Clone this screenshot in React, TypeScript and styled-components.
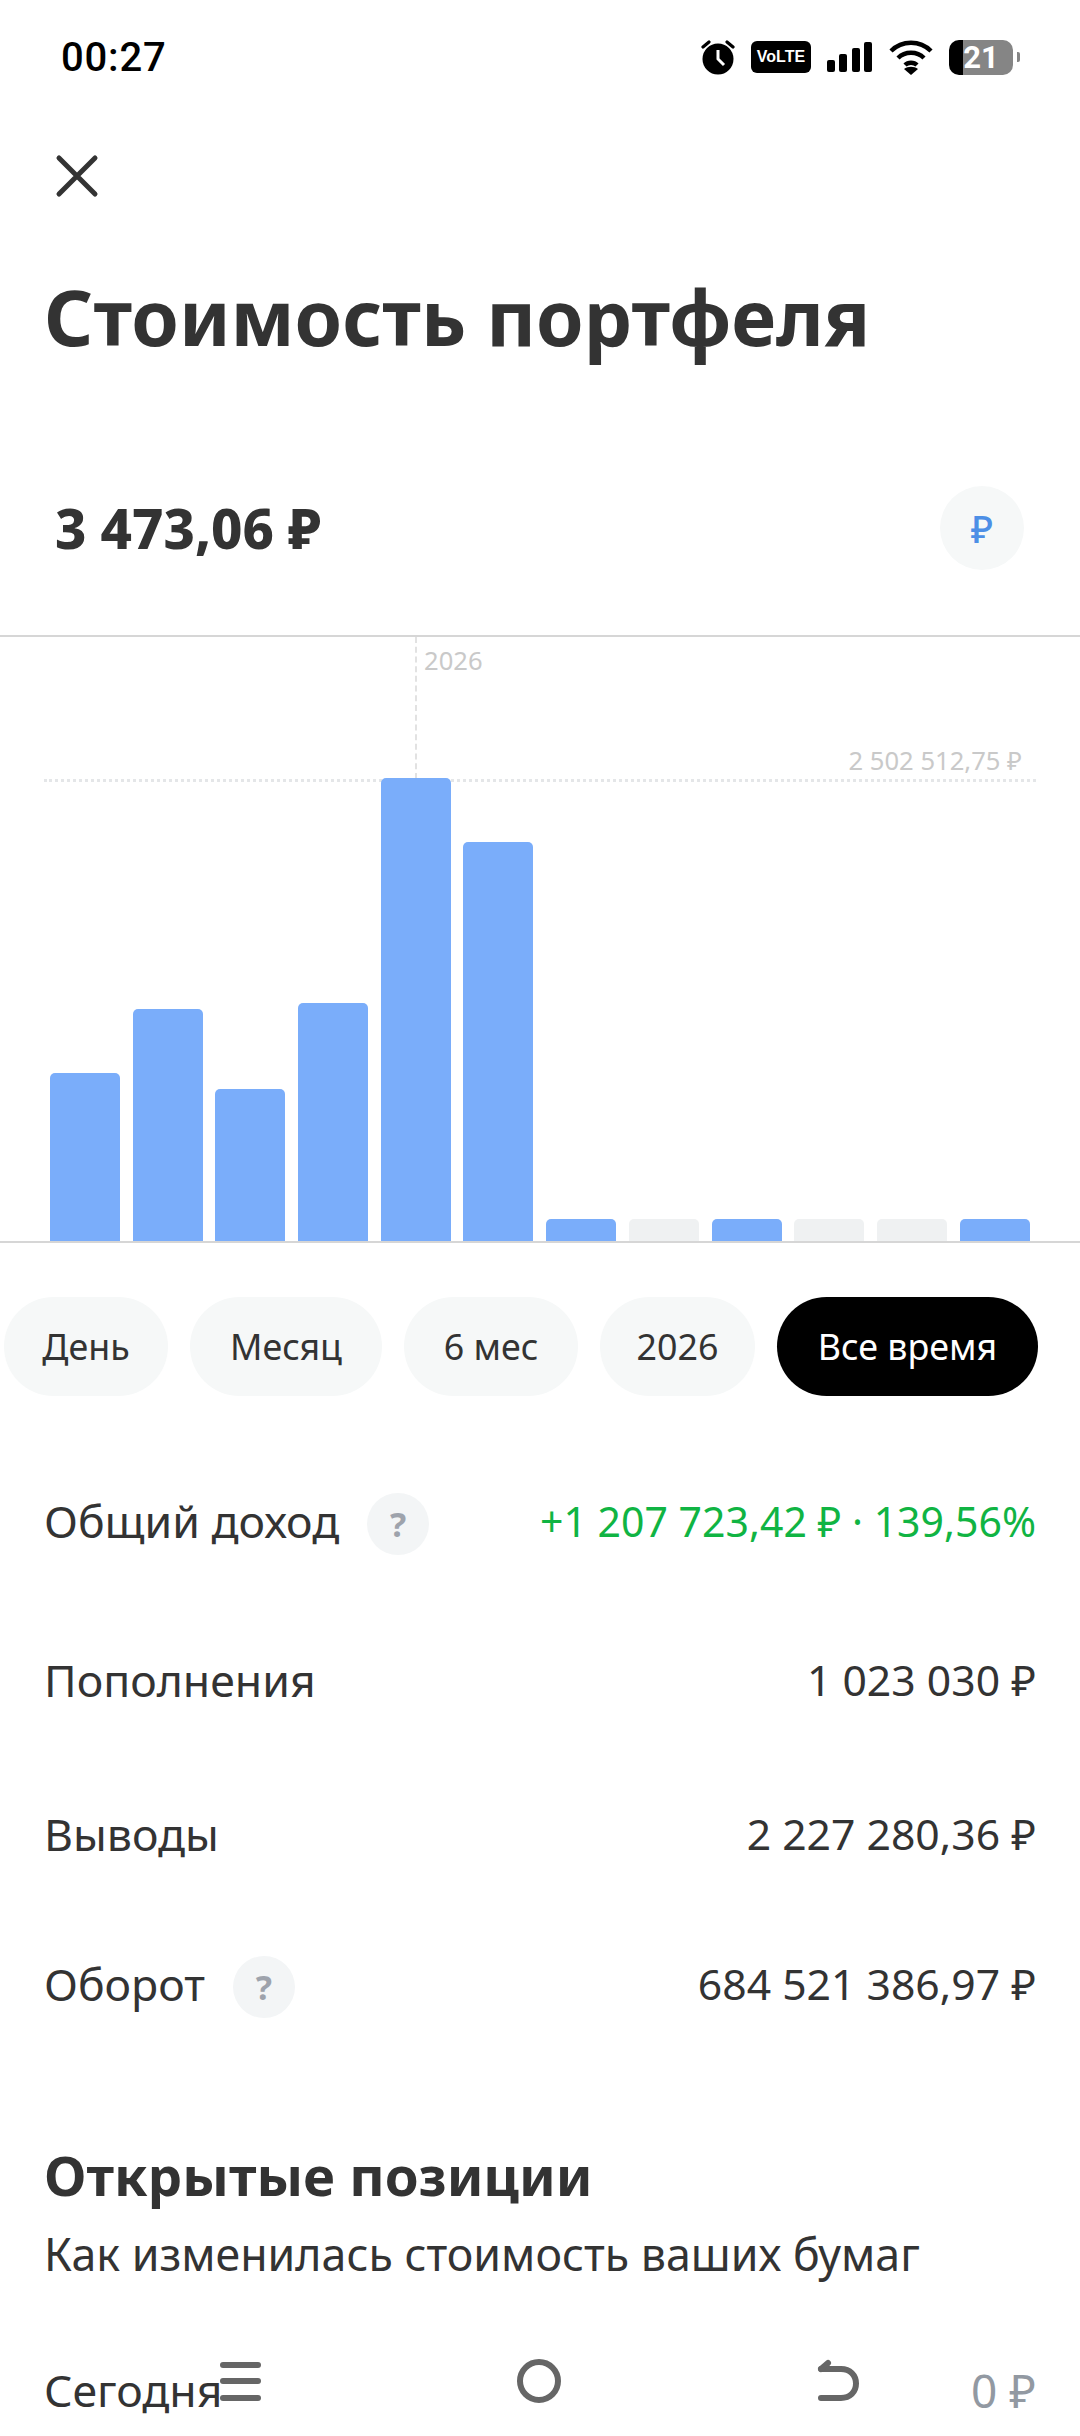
import React from "react";
import styled, { createGlobalStyle } from "styled-components";

const Global = createGlobalStyle`
  html, body { margin: 0; padding: 0; background: #fff; }
  * { box-sizing: border-box; }
  body { font-family: "Noto Sans", "Liberation Sans", sans-serif; color: #333; }
`;

const Screen = styled.div`
  position: relative;
  width: 1080px;
  height: 2436px;
  overflow: hidden;
  background: #fff;
`;

const StatusBar = styled.div`
  height: 116px;
  padding: 38px 60px 0 61px;
  display: flex;
  justify-content: space-between;
  align-items: flex-start;
`;
const Time = styled.span`
  font: 500 40px/40px Roboto, sans-serif;
  color: #000;
  letter-spacing: 0.8px;
`;
const StatusIcons = styled.div`
  display: flex;
  align-items: center;
  gap: 16px;
  height: 40px;
  margin-top: -1px;
`;
const Volte = styled.span`
  width: 60px;
  height: 32px;
  border-radius: 6px;
  background: #000;
  color: #fff;
  font: 700 16px/32px "Liberation Sans", sans-serif;
  text-align: center;
`;
const Battery = styled.span`
  position: relative;
  width: 64px;
  height: 35px;
  border-radius: 10px;
  background: linear-gradient(90deg, #000 22%, #858585 22%);
  color: #fff;
  font: 700 31px/35px Roboto, sans-serif;
  text-align: center;
  margin-right: 7px;
  &::after {
    content: "";
    position: absolute;
    right: -7px;
    top: 12px;
    width: 3px;
    height: 10px;
    border-radius: 0 2px 2px 0;
    background: #858585;
  }
`;
const CloseRow = styled.div`
  height: 148px;
  padding: 38px 0 0 55px;
`;
const Title = styled.h1`
  margin: 0;
  padding-left: 44px;
  font: 700 76.6px/104px "Noto Sans", sans-serif;
  color: #333;
`;
const ValueRow = styled.div`
  margin-top: 118px;
  height: 149px;
  padding: 0 56px 0 55px;
  display: flex;
  justify-content: space-between;
  align-items: flex-start;
`;
const Value = styled.div`
  font: 800 54.4px/84px "Noto Sans", sans-serif;
  color: #333;
`;
const CurrencyButton = styled.div`
  width: 84px;
  height: 84px;
  border-radius: 50%;
  background: #f6f8f8;
  color: #4d8fe6;
  font: 500 38px/84px "Noto Sans", sans-serif;
  text-align: center;
`;
const Chart = styled.div`
  position: relative;
  height: 608px;
  border-top: 2px solid #d6d6d6;
  border-bottom: 2px solid #d6d6d6;
  padding: 0 44px 0 50px;
  display: flex;
  align-items: flex-end;
  gap: 12.7px;
`;
const Bar = styled.div<{ $h: number; $empty?: boolean }>`
  position: relative;
  width: 70px;
  height: ${(p) => p.$h}px;
  border-radius: 5px 5px 0 0;
  background: ${(p) => (p.$empty ? "#eff1f2" : "#7aadfa")};
`;
const VLine = styled.div`
  position: absolute;
  left: 415px;
  top: 0;
  height: 142px;
  border-left: 2px dashed #e2e2e2;
`;
const HLine = styled.div`
  position: absolute;
  left: 44px;
  right: 44px;
  top: 142px;
  border-top: 3px dotted #e4e6e8;
`;
const YearLabel = styled.span`
  position: absolute;
  left: 424px;
  top: 8px;
  font: 400 25.6px/32px "Noto Sans", sans-serif;
  color: #c9c9c9;
`;
const MaxLabel = styled.span`
  position: absolute;
  right: 58px;
  top: 108px;
  font: 400 25.6px/32px "Noto Sans", sans-serif;
  color: #c9c9c9;
`;
const Pills = styled.div`
  margin-top: 54px;
  padding-left: 4px;
  display: flex;
  gap: 22px;
`;
const Pill = styled.div<{ $w: number; $active?: boolean }>`
  width: ${(p) => p.$w}px;
  height: 99px;
  border-radius: 50px;
  background: ${(p) => (p.$active ? "#000" : "#f6f8f8")};
  color: ${(p) => (p.$active ? "#fff" : "#333")};
  font: 400 35.8px/99px "Noto Sans", sans-serif;
  text-align: center;
`;
const Rows = styled.div`
  margin-top: 95px;
  padding: 0 44px;
`;
const Row = styled.div<{ $h: number }>`
  height: ${(p) => p.$h}px;
  display: flex;
  align-items: flex-start;
  justify-content: space-between;
  font: 400 44.6px/60px "Noto Sans", sans-serif;
`;
const Label = styled.div`
  display: flex;
  align-items: flex-start;
  gap: 28px;
`;
const Amount = styled.span<{ $green?: boolean; $muted?: boolean }>`
  color: ${(p) => (p.$green ? "#10b443" : p.$muted ? "#9299a2" : "#333")};
  font-size: ${(p) => (p.$green ? 41 : p.$muted ? 46 : 42.7)}px;
`;
const Help = styled.span`
  width: 62px;
  height: 62px;
  border-radius: 50%;
  background: #f3f5f6;
  color: #9ea3ac;
  font: 700 34px/62px "Noto Sans", sans-serif;
  text-align: center;
  margin-top: 2px;
`;
const Section = styled.h2`
  margin: 124px 0 0;
  padding-left: 44px;
  font: 700 54.6px/70px "Noto Sans", sans-serif;
  color: #333;
`;
const Subtitle = styled.p`
  margin: 16px 0 0;
  padding-left: 44px;
  font: 400 44.7px/56px "Noto Sans", sans-serif;
`;
const TodayRow = styled(Row)`
  margin-top: 78px;
  padding: 0 44px;
`;
const NavBar = styled.div`
  position: absolute;
  left: 0;
  top: 2358px;
  width: 1080px;
  height: 48px;
  color: #666;
`;
const NavIcon = styled.svg<{ $x: number }>`
  position: absolute;
  left: ${(p) => p.$x}px;
  top: 0;
`;

const heights = [168, 232, 152, 238, 463, 399, 22, 22, 22, 22, 22, 22];

export default function App() {
  return (
    <Screen>
      <Global />
      <StatusBar>
        <Time>00:27</Time>
        <StatusIcons>
          <svg width="34" height="36" viewBox="0 0 34 36">
            <circle cx="17" cy="20" r="15.5" fill="#000" />
            <path d="M17 11v9l6 6" fill="none" stroke="#fff" strokeWidth="3" />
            <path d="M2 8l6-5M32 8l-6-5" stroke="#000" strokeWidth="3.2" strokeLinecap="round" />
          </svg>
          <Volte>VoLTE</Volte>
          <svg width="46" height="32" viewBox="0 0 46 32" fill="#000">
            <rect x="0" y="19" width="8" height="12" rx="2" />
            <rect x="12" y="13" width="8" height="18" rx="2" />
            <rect x="25" y="7" width="8" height="24" rx="2" />
            <rect x="37" y="1" width="8" height="30" rx="2" />
          </svg>
          <svg width="44" height="38" viewBox="0 0 44 38" fill="none" stroke="#000" strokeWidth="4.4">
            <path d="M2 13C13 2 31 2 42 13" />
            <path d="M9 20C16 13 28 13 35 20" />
            <path d="M16 27C19 24 25 24 28 27" />
            <path d="M22 37l-7-6c4-3 10-3 14 0z" fill="#000" stroke="none" />
          </svg>
          <Battery>21</Battery>
        </StatusIcons>
      </StatusBar>
      <CloseRow>
        <svg width="44" height="44" viewBox="0 0 44 44" stroke="#333" strokeWidth="5" strokeLinecap="round">
          <path d="M4 4l36 36M40 4L4 40" />
        </svg>
      </CloseRow>
      <Title>Стоимость портфеля</Title>
      <ValueRow>
        <Value>3 473,06 ₽</Value>
        <CurrencyButton>₽</CurrencyButton>
      </ValueRow>
      <Chart>
        <VLine />
        <HLine />
        <YearLabel>2026</YearLabel>
        <MaxLabel>2 502 512,75 ₽</MaxLabel>
        {heights.map((h, i) => (
          <Bar key={i} $h={h} $empty={i === 7 || i === 9 || i === 10} />
        ))}
      </Chart>
      <Pills>
        <Pill $w={164}>День</Pill>
        <Pill $w={192}>Месяц</Pill>
        <Pill $w={174}>6 мес</Pill>
        <Pill $w={155}>2026</Pill>
        <Pill $w={261} $active>Все время</Pill>
      </Pills>
      <Rows>
        <Row $h={159}>
          <Label>Общий доход <Help>?</Help></Label>
          <Amount $green>+1 207 723,42 ₽ · 139,56%</Amount>
        </Row>
        <Row $h={154}>
          <Label>Пополнения</Label>
          <Amount>1 023 030 ₽</Amount>
        </Row>
        <Row $h={150}>
          <Label>Выводы</Label>
          <Amount>2 227 280,36 ₽</Amount>
        </Row>
        <Row $h={62}>
          <Label>Оборот <Help>?</Help></Label>
          <Amount>684 521 386,97 ₽</Amount>
        </Row>
      </Rows>
      <Section>Открытые позиции</Section>
      <Subtitle>Как изменилась стоимость ваших бумаг</Subtitle>
      <TodayRow $h={60}>
        <span>Сегодня</span>
        <Amount $muted>0 ₽</Amount>
      </TodayRow>
      <NavBar>
        <NavIcon $x={220} width="42" height="46" viewBox="0 0 42 46" fill="currentColor">
          <rect x="0" y="4" width="41" height="6" rx="3" />
          <rect x="0" y="20" width="41" height="6" rx="3" />
          <rect x="0" y="37" width="41" height="6" rx="3" />
        </NavIcon>
        <NavIcon $x={516} width="46" height="46" viewBox="0 0 46 46" fill="none" stroke="currentColor" strokeWidth="6">
          <circle cx="23" cy="23" r="19" />
        </NavIcon>
        <NavIcon $x={816} width="46" height="46" viewBox="0 0 46 46" fill="none" stroke="currentColor" strokeWidth="6" strokeLinecap="round">
          <path d="M5 11h20c9 0 15 6 15 14.5S34 40 25 40H5" />
          <path d="M12 5L5 11" />
        </NavIcon>
      </NavBar>
    </Screen>
  );
}
